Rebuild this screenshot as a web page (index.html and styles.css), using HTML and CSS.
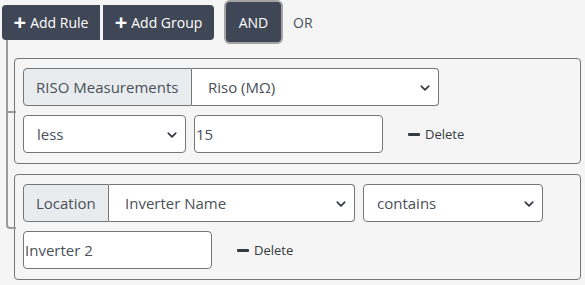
FILE: index.html
```html
<!DOCTYPE html>
<html lang="en">
<head>
    <meta charset="UTF-8">
    <meta name="viewport" content="width=device-width, initial-scale=1.0">
    <title>Query Builder</title>
    <link rel="stylesheet" href="styles.css">
</head>
<body>
    <div class="builder">
        <div class="group-header">
            <div class="btn-group">
                <button class="btn btn-dark"><span class="plus">+</span>Add Rule</button>
                <button class="btn btn-dark"><span class="plus">+</span>Add Group</button>
            </div>
            <div class="conditions">
                <button class="btn btn-dark btn-active">AND</button>
                <button class="btn btn-link">OR</button>
            </div>
        </div>

        <div class="rules-list">
            <div class="rule">
                <div class="rule-row">
                    <div class="input-group">
                        <span class="input-label label-riso">RISO Measurements</span>
                        <div class="select select-field1">
                            <select><option>Riso (MΩ)</option></select>
                            <svg class="chevron" viewBox="0 0 16 16"><path d="M2 5l6 6 6-6" /></svg>
                        </div>
                    </div>
                </div>
                <div class="rule-row">
                    <div class="select select-op1">
                        <select><option>less</option></select>
                        <svg class="chevron" viewBox="0 0 16 16"><path d="M2 5l6 6 6-6" /></svg>
                    </div>
                    <input type="text" class="form-input" value="15">
                    <button class="btn-delete"><span class="minus"></span>Delete</button>
                </div>
            </div>

            <div class="rule">
                <div class="rule-row">
                    <div class="input-group">
                        <span class="input-label label-location">Location</span>
                        <div class="select select-field2">
                            <select><option>Inverter Name</option></select>
                            <svg class="chevron" viewBox="0 0 16 16"><path d="M2 5l6 6 6-6" /></svg>
                        </div>
                    </div>
                    <div class="select select-op2">
                        <select><option>contains</option></select>
                        <svg class="chevron" viewBox="0 0 16 16"><path d="M2 5l6 6 6-6" /></svg>
                    </div>
                </div>
                <div class="rule-row row-wide">
                    <input type="text" class="form-input" value="Inverter 2">
                    <button class="btn-delete"><span class="minus"></span>Delete</button>
                </div>
            </div>
        </div>
    </div>
</body>
</html>
```

FILE: styles.css
```css
* {
    box-sizing: border-box;
}
body {
    margin: 0;
    font-family: 'Open Sans', 'Noto Sans', sans-serif;
    background: #f5f5f5;
    color: #495057;
}
.builder {
    padding: 2px 4px 0 2px;
}
.group-header {
    display: flex;
    align-items: center;
    height: 40px;
}
.btn-group {
    display: flex;
    gap: 3px;
}
.btn {
    font-family: inherit;
    font-size: 14px;
    border: none;
    cursor: pointer;
    display: inline-flex;
    align-items: center;
    justify-content: center;
    white-space: nowrap;
}
.btn-dark {
    background: #3f4756;
    color: white;
    height: 35px;
    padding: 0 6px;
}
.btn-group .btn:first-child {
    width: 98px;
    border-radius: 4px 0 0 4px;
}
.btn-group .btn:last-child {
    width: 111px;
    border-radius: 0 4px 4px 0;
}
.plus {
    font-size: 22px;
    font-weight: 700;
    line-height: 1;
    margin-right: 4px;
    margin-top: -3px;
}
.conditions {
    display: flex;
    align-items: center;
    margin-left: 12px;
}
.btn-active {
    width: 55px;
    height: 40px;
    border-radius: 4px;
    box-shadow: 0 0 0 2px #a3a3a3;
}
.btn-link {
    background: none;
    color: #495057;
    padding: 0 12px;
    height: 40px;
}
.rules-list {
    margin-left: 12px;
    padding-top: 16px;
}
.rule {
    position: relative;
    width: 567px;
    border: 1px solid #767676;
    border-radius: 4px;
    padding: 9px 8px 10px;
    display: flex;
    flex-direction: column;
    gap: 9px;
}
.rule + .rule {
    margin-top: 10px;
}
.rule::before,
.rule::after {
    content: "";
    position: absolute;
    left: -9px;
    width: 8px;
    border-color: #9a9a9a;
    border-style: solid;
}
.rule::before {
    top: -12px;
    height: calc(50% + 12px);
    border-width: 0 0 2px 2px;
}
.rule:first-child::before {
    top: -19px;
    height: calc(50% + 19px);
}
.rule:last-child::before {
    border-radius: 0 0 0 4px;
}
.rule::after {
    top: 50%;
    height: 50%;
    border-width: 0 0 0 2px;
}
.rule:last-child::after {
    display: none;
}
.rule-row {
    display: flex;
    align-items: center;
    gap: 8px;
    height: 38px;
}
.input-group {
    display: flex;
    height: 38px;
}
.input-label {
    display: flex;
    align-items: center;
    padding: 0 12px;
    background: #e9ecef;
    border: 1px solid #767676;
    border-radius: 4px 0 0 4px;
    font-size: 15px;
    white-space: nowrap;
    color: #495057;
}
.label-riso {
    width: 169px;
}
.label-location {
    width: 86px;
}
.select {
    position: relative;
    height: 38px;
}
.select select {
    width: 100%;
    height: 100%;
    appearance: none;
    background: white;
    border: 1px solid #767676;
    border-radius: 4px;
    padding: 0 30px 0 13px;
    font-family: inherit;
    font-size: 15px;
    color: #495057;
}
.input-group .select select {
    border-left: none;
    border-radius: 0 4px 4px 0;
    padding-left: 16px;
}
.chevron {
    position: absolute;
    right: 9px;
    top: 15px;
    width: 10px;
    height: 10px;
    fill: none;
    stroke: #343a40;
    stroke-width: 2.6;
    stroke-linecap: round;
    stroke-linejoin: round;
    pointer-events: none;
}
.select-field1 {
    width: 247px;
}
.select-field2 {
    width: 246px;
}
.select-op1 {
    width: 163px;
}
.select-op2 {
    width: 180px;
}
.form-input {
    width: 189px;
    height: 38px;
    background: white;
    border: 1px solid #767676;
    border-radius: 4px;
    padding: 0 1px;
    font-family: inherit;
    font-size: 15px;
    color: #495057;
}
.btn-delete {
    display: inline-flex;
    align-items: center;
    gap: 5px;
    background: none;
    border: none;
    margin-left: 11px;
    font-family: inherit;
    font-size: 13px;
    color: #343a40;
    cursor: pointer;
}
.minus {
    width: 12px;
    height: 3px;
    border-radius: 1px;
    background: #343a40;
}
```
